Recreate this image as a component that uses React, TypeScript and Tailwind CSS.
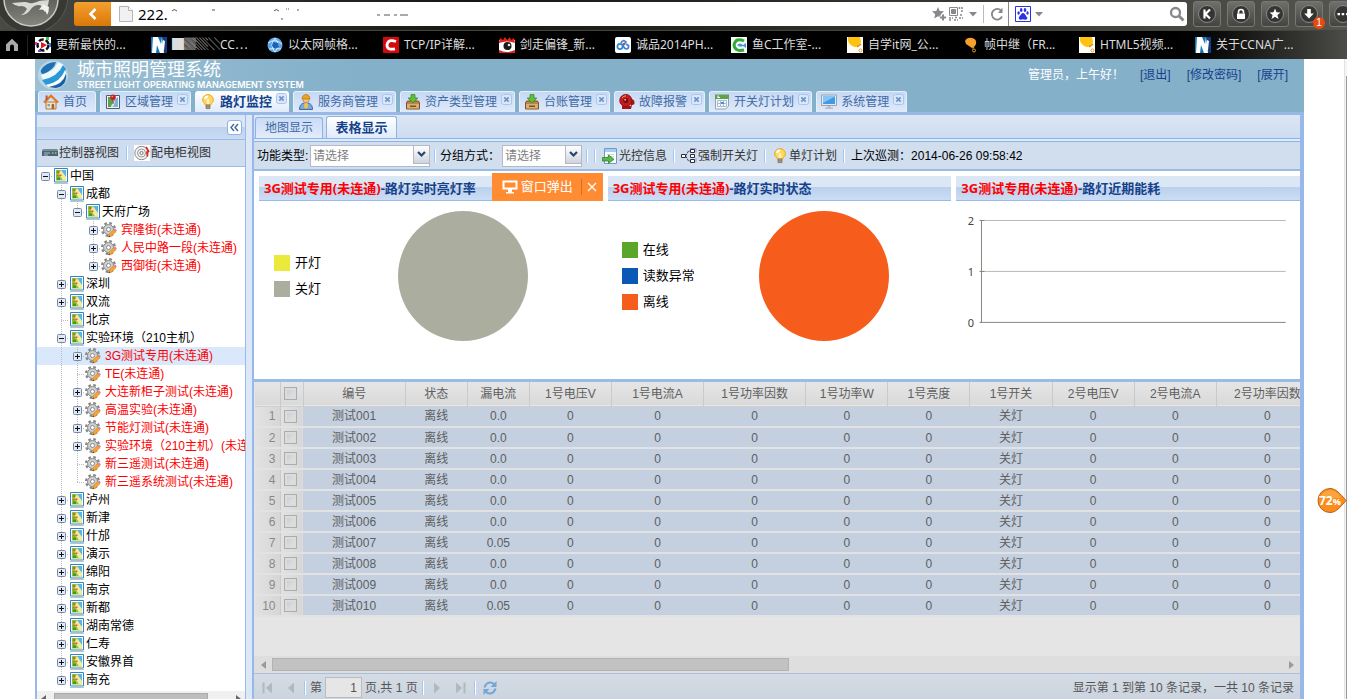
import React from "react";

type IconProps = { className?: string };

/* ---------- small icons ---------- */

const HouseIcon = () => (
  <svg viewBox="0 0 16 16" className="size-4 shrink-0">
    <path d="M3 8h10v7H3z" fill="#f6e3bd" stroke="#b07a3c" />
    <path d="M1 8.5 8 1.8l7 6.7" fill="none" stroke="#e2761b" strokeWidth="2.2" />
    <path d="M2.6 1.5h2v4l-2 1.6z" fill="#b4543a" />
    <path d="M8.6 15V10.4q1.3-1.4 2.6 0V15z" fill="#a5642c" />
    <path d="M4.5 10h2.4v2.4H4.5z" fill="#6aa5dd" />
  </svg>
);
const MapPinIcon = () => (
  <svg viewBox="0 0 16 16" className="size-4 shrink-0">
    <path d="M1.500 1.500h13v13h-13z" fill="#eef4f8" stroke="#4b5f73" />
    <path d="M3 3h4l1 4-2 6H3z" fill="#5fa04c" />
    <path d="M9 6l4-3v10H7z" fill="#7cb3dc" />
    <path d="M7 13l2-6 1 1-2 5z" fill="#f5eeb0" />
    <path d="M8 5v5" stroke="#444" />
    <circle cx="8" cy="3.2" r="2.8" fill="#cf2020" />
    <circle cx="7.3" cy="2.5" r=".8" fill="#ff9a9a" />
  </svg>
);
const BulbIcon = () => (
  <svg viewBox="0 0 16 16" className="size-4 shrink-0">
    <path d="M8 .6a5.400 5.400 0 0 0-5.400 5.300c0 2.400 2.400 3.200 2.800 5.100h5.200c.4-1.900 2.800-2.700 2.800-5.100A5.400 5.400 0 0 0 8 .6z" fill="#ffd95c" stroke="#eda521" />
    <path d="M5 5a3 3 0 0 1 3-2.600" stroke="#fff" strokeWidth="2" fill="none" />
    <path d="M8 5v5" stroke="#fff3b8" strokeWidth="2.400" />
    <path d="M6 11h4v3.600H6z" fill="#b0a690" stroke="#7d745f" strokeWidth=".8" />
    <path d="M6 12.800h4" stroke="#7d745f" strokeWidth=".8" />
  </svg>
);
const WorkerIcon = () => (
  <svg viewBox="0 0 16 16" className="size-4 shrink-0">
    <path d="M1.500 15.500c0-4.500 2-6.500 6.500-6.500s6.500 2 6.500 6.500z" fill="#7ba8da" stroke="#3f6cab" />
    <path d="M6.500 9h3l.5 4-2 2-2-2z" fill="#f3c344" />
    <circle cx="8" cy="5.600" r="3.200" fill="#f1c28c" stroke="#a8713a" strokeWidth=".6" />
    <path d="M4 5C4 2 6 .500 8 .500S12 2 12 5z" fill="#f0a31f" stroke="#b8730c" strokeWidth=".7" />
  </svg>
);
const BoxIcon = () => (
  <svg viewBox="0 0 16 16" className="size-4 shrink-0">
    <path d="M2.500 7h11l1 2v6h-13V9z" fill="#b98548" stroke="#7a5120" />
    <path d="M2 10h12v4.500H2z" fill="#d9ae70" />
    <path d="M5 11.500h6V13H5z" fill="#7a5120" />
    <path d="M6 .600h4V4h2.800L8 9 3.200 4H6z" fill="#63be3d" stroke="#378a1e" strokeWidth=".8" />
  </svg>
);
const BellIcon = () => (
  <svg viewBox="0 0 16 16" className="size-4 shrink-0">
    <path d="M11 6q4-2 4.500 2 .500 3-2.500 3l-1 4H3v-3h9z" fill="#a61515" />
    <circle cx="6.800" cy="6.500" r="6" fill="#c81c1c" stroke="#8c0f0f" />
    <circle cx="6.800" cy="6.500" r="2.600" fill="#7d0c0c" />
    <circle cx="6.200" cy="5.800" r="1" fill="#f2a0a0" />
    <path d="M3 4q1.500-2.200 4-2.200" stroke="#ff9d9d" fill="none" />
  </svg>
);
const CalendarIcon = () => (
  <svg viewBox="0 0 16 16" className="size-4 shrink-0">
    <path d="M1.500 1.500h13v11l-2.500 2.500H1.500z" fill="#f6f9fc" stroke="#8ea2b5" />
    <path d="M1 .500h14V5H1z" fill="#5da349" />
    <path d="M4 1.500v2h2" stroke="#fff" strokeWidth="1.200" fill="none" />
    <path d="M3.500 6.500h9v6h-9zM3.500 9.500h9M6.500 6.500v6M9.500 6.500v6" stroke="#a9bccf" fill="none" />
    <path d="M7 8h3v2H7z" fill="#4f8ce0" />
    <path d="M15 12l-3 3v-3z" fill="#c8d2dc" />
  </svg>
);
const MonitorIcon = () => (
  <svg viewBox="0 0 16 16" className="size-4 shrink-0">
    <path d="M.500 1h15v10.500H.500z" fill="#e5e9ee" stroke="#98a3b0" />
    <path d="M2 2.500h12V10H2z" fill="#3f9be8" />
    <path d="M2 2.500h12L2 9z" fill="#86c5f7" />
    <path d="M6.500 12h3v1.500h2.500V15H4v-1.500h2.500z" fill="#b5bdc7" />
  </svg>
);
const CloseBox = () => (
  <svg viewBox="0 0 11 11" className="size-[11px]">
    <rect x=".5" y=".5" width="10" height="10" rx="2" fill="#dbe8fa" stroke="#a9c5ec" />
    <path d="M3.300 3.300l4.400 4.400M7.700 3.300 3.300 7.700" stroke="#6f94c8" strokeWidth="1.700" />
  </svg>
);
const RegionIcon = () => (
  <svg viewBox="0 0 16 16" className="size-4 shrink-0">
    <path d="M1 15.500h14" stroke="#b9c4cc" />
    <path d="M1.500.500h13v13.500h-13z" fill="#fff" stroke="#2f86bb" />
    <path d="M3 2h10v10.500H3z" fill="#8cc63c" />
    <path d="M8 2h5v7z" fill="#57b5e8" />
    <path d="M8 2l5 7v3.500h-3L6 6z" fill="#f4e9a3" />
    <path d="M4 3h2v2H4zM6.500 6.500h2V8h-2zM4 7h1.500v1.500H4z" fill="#df5a26" />
    <path d="M4 9.500h3v2.500H4z" fill="#4f951c" />
  </svg>
);
const GearIcon = () => (
  <svg viewBox="0 0 16 16" className="size-4 shrink-0">
    <circle cx="7.500" cy="7.500" r="6.400" fill="none" stroke="#868686" strokeWidth="2.200" strokeDasharray="2.600 2.430" />
    <circle cx="7.500" cy="7.500" r="5" fill="#cfcfcf" stroke="#8a8a8a" />
    <circle cx="7.500" cy="7.500" r="2" fill="#fff" stroke="#8a8a8a" />
    <path d="M7.500 15l.700-3 4.500-4.500 2.200 2.200-4.500 4.500z" fill="#f7a52b" stroke="#c47a1c" strokeWidth=".5" />
    <path d="M12.700 7.500l1.200-1.200 2.100 2.100-1.200 1.200z" fill="#d58bc4" />
    <path d="M7.500 15l.5-1.800 1.300 1.300z" fill="#333" />
  </svg>
);
const ControllerIcon = () => (
  <svg viewBox="0 0 16 16" className="size-4 shrink-0">
    <path d="M1 4h14l1 2v5H0V6z" fill="#4f6272" />
    <path d="M0 5h16" stroke="#9fb4c2" />
    <path d="M2 8h6M2 10h4" stroke="#9dc1d8" />
    <path d="M10 8h1.500M13 8h1.500" stroke="#79e06b" strokeWidth="1.500" />
  </svg>
);
const MeterIcon = () => (
  <svg viewBox="0 0 16 16" className="size-4 shrink-0">
    <path d="M0 0h16v16H0z" fill="#fff" />
    <circle cx="7.500" cy="8" r="6.700" fill="#f3f3f3" stroke="#8a8a8a" />
    <circle cx="7.500" cy="8" r="4" fill="none" stroke="#999" />
    <circle cx="7.500" cy="8" r="1.600" fill="none" stroke="#777" />
    <path d="M12 2l2.600 4.200-1.700 1 .6 4.300" stroke="#dd2626" strokeWidth="1.700" fill="none" />
  </svg>
);
const LightControlIcon = () => (
  <svg viewBox="0 0 16 16" className="size-4 shrink-0">
    <path d="M2.500.500h12v15h-12z" fill="#fff" stroke="#6b9bc9" />
    <path d="M3 1h11v3H3z" fill="#a8cdf0" />
    <path d="M5 6.500h7M5 8.500h7" stroke="#c5d6e6" />
    <path d="M.500 9.500h6V7l5.500 4.300-5.500 4V13h-6z" fill="#5cb648" stroke="#2f8420" strokeWidth=".8" />
  </svg>
);
const SwitchTreeIcon = () => (
  <svg viewBox="0 0 16 16" className="size-4 shrink-0" fill="none" stroke="#2d2d3f">
    <path d="M5 7.500l2.500-4.500h2M5 8.500l2.500 4.500h2" strokeDasharray="2 1" />
    <path d="M.500 6.500h4v3h-4z" fill="#fff" />
    <path d="M9.500 1.500h4v3h-4zM9.500 6.500h4v3h-4zM9.500 11.500h4v3h-4z" fill="#fff" />
    <path d="M9 .500h6v4M15 10v4.500" stroke="#9a96d8" />
  </svg>
);

/* ---------- browser chrome ---------- */

const BrowserLogo = () => (
  <svg viewBox="0 0 74 31" className="h-[31px] w-[74px] shrink-0">
    <defs>
      <linearGradient id="logoRing" x1="0" y1="0" x2="0" y2="1">
        <stop offset="0" stopColor="#3a3a38" />
        <stop offset="1" stopColor="#86867f" />
      </linearGradient>
    </defs>
    <circle cx="31" cy="-4" r="37" fill="#383834" stroke="#5b5b55" />
    <circle cx="31" cy="-1" r="27" fill="url(#logoRing)" stroke="#c9c9c5" strokeWidth="1.500" />
    <path d="M12 3q4 4 9 3 4 0 6 3-2 4-6 6 6 0 10-6 3-4 8-4 5 1 5 7 4-4 5-12z" fill="#d8d8d5" />
    <path d="M22 0q5 4 11 3 5-1 8-3z" fill="#63635e" />
    <path d="M39 10q6-2 8 5 2-3 2-8l-6-3z" fill="#f0f0ee" />
  </svg>
);

const ChromeButton = ({ label, children, badge }: { label: string; children: React.ReactNode; badge?: string }) => (
  <button aria-label={label} className="relative flex h-[26px] w-7 shrink-0 items-center justify-center rounded-[3px] border border-[#777773] bg-linear-to-b from-[#6f6f6b] to-[#444440]">
    <svg viewBox="0 0 20 20" className="size-5">
      <circle cx="10" cy="10" r="8.500" fill="#343432" stroke="#8a8a86" />
      {children}
    </svg>
    {badge && (
      <span className="absolute top-[15px] left-[17px] z-10 flex size-3 items-center justify-center rounded-full bg-[#e8490f] text-[10px] leading-3 text-white">{badge}</span>
    )}
  </button>
);

const HelixMark = () => (
  <svg viewBox="0 0 16 16" className="size-4 shrink-0">
    <path d="M0 0h16v16H0z" fill="#1279b8" />
    <path d="M2 0h5l3 7 1-7h4l-2 16H9L6 8l-1 8H1z" fill="#fff" />
    <path d="M11 0h5v16h-3z" fill="#123f86" />
    <path d="M12 3l2 1-1 9-2 1z" fill="#fff" />
  </svg>
);
const BalloonMark = ({ plate }: { plate: boolean }) => (
  <svg viewBox="0 0 16 16" className="size-4 shrink-0">
    {plate && <path d="M0 0h16v16H0z" fill="#fffdf5" />}
    <path d={plate ? "M1 0h12l1 5q-2 5-6 5Q3 9 1 4z" : "M2 4q2-4 7-3 5 1 4 6-2 4-4 4L3 7z"} fill={plate ? "#ffc30f" : "#f5a02c"} />
    <path d={plate ? "M10 10l4-3" : "M9 11l2-1"} stroke="#d88a1c" strokeWidth="1.500" />
    <circle cx={plate ? 13.500 : 11} cy="13.500" r="1.500" fill="none" stroke="#e59a2a" />
  </svg>
);

const bookmarks: { name: string; icon: React.ReactNode }[] = [
  {
    name: "更新最快的...",
    icon: (
      <svg viewBox="0 0 16 16" className="size-4 shrink-0">
        <path d="M0 0h16v16H0z" fill="#fff" />
        <circle cx="8" cy="8" r="5.500" fill="none" stroke="#111" strokeWidth="2.500" strokeDasharray="5 2" />
        <path d="M6 5l6 3-6 3.500z" fill="#e01818" />
        <path d="M11 0h3v3h-3z" fill="#2ecb4a" />
        <path d="M0 5h2v3H0z" fill="#d932d0" />
        <path d="M14 6h2v4h-2z" fill="#2f7fe8" />
        <path d="M3 13h3v2H3z" fill="#7a41d8" />
      </svg>
    ),
  },
  { name: "█▓▒░CC⋯", icon: <HelixMark /> },
  {
    name: "以太网帧格...",
    icon: (
      <svg viewBox="0 0 16 16" className="size-4 shrink-0">
        <circle cx="8" cy="8" r="7.500" fill="#5ea7e4" />
        <path d="M1 6q7-5 14 1M2 12q6-1 12 0M8 1Q2 8 8 15M8 1q6 7 0 14" stroke="#d9edff" fill="none" />
        <path d="M6 5l5 1 1 4-4 2-3-3z" fill="#1d63b3" />
      </svg>
    ),
  },
  {
    name: "TCP/IP详解...",
    icon: (
      <svg viewBox="0 0 16 16" className="size-4 shrink-0">
        <path d="M0 0h16v16H0z" fill="#d5080b" />
        <path d="M13 4.500Q5 1.500 4 8q0 5.500 8 3.800" fill="none" stroke="#fff" strokeWidth="2.800" />
      </svg>
    ),
  },
  {
    name: "剑走偏锋_新...",
    icon: (
      <svg viewBox="0 0 16 16" className="size-4 shrink-0">
        <path d="M0 3h16v13H0z" fill="#fff" />
        <path d="M0 5l1-4 3 2 2-3 2 3 3-3 1 3 3-2 1 5q-8-3-16 0z" fill="#e2231a" />
        <path d="M0 13q8 4 16 0v3H0z" fill="#e2231a" />
        <circle cx="8.500" cy="9" r="4" fill="#1a1a1a" />
        <circle cx="10" cy="8" r="1.300" fill="#eee" />
      </svg>
    ),
  },
  {
    name: "诚品2014PH...",
    icon: (
      <svg viewBox="0 0 16 16" className="size-4 shrink-0">
        <rect width="16" height="16" rx="2" fill="#fff" />
        <circle cx="5" cy="9.500" r="2.600" fill="none" stroke="#2f86dd" strokeWidth="1.700" />
        <path d="M6 6q2-4 5-1l-3 3q1 4 4 4 2-1 1.500-3.500L11 7" fill="none" stroke="#2f86dd" strokeWidth="1.700" />
        <circle cx="9" cy="7" r="1.300" fill="#e23b3b" />
      </svg>
    ),
  },
  {
    name: "鱼C工作室-...",
    icon: (
      <svg viewBox="0 0 16 16" className="size-4 shrink-0">
        <path d="M0 0h16v16H0z" fill="#f6fff4" />
        <path d="M13 4Q5 0 3 8q1 7 10 5" fill="none" stroke="#34a83a" strokeWidth="3" />
        <path d="M6 8q3-3 6 0l3-2v5l-3-2q-3 2-6-1z" fill="#4a98d8" />
      </svg>
    ),
  },
  { name: "自学it网_公...", icon: <BalloonMark plate /> },
  { name: "帧中继（FR...", icon: <BalloonMark plate={false} /> },
  { name: "HTML5视频...", icon: <BalloonMark plate /> },
  { name: "关于CCNA广...", icon: <HelixMark /> },
];

const Caret = () => (
  <svg viewBox="0 0 8 5" className="h-[5px] w-2 shrink-0">
    <path d="M0 0h8L4 4.500z" fill="#888" />
  </svg>
);

function BrowserChrome() {
  return (
    <div className="shrink-0 bg-black text-white">
      <div className="flex h-[31px] items-start overflow-hidden border-b border-[#45453f] bg-linear-to-r from-[#4a4a45] via-[#171612] via-35% to-[#55554f]">
        <BrowserLogo />
        <button aria-label="后退" className="mt-[2px] flex h-6 w-[37px] shrink-0 items-center justify-center rounded-l-[3px] bg-linear-to-b from-[#f3a02c] to-[#d97807]">
          <svg viewBox="0 0 12 14" className="h-3.5 w-3">
            <path d="M8.500 2 3.500 7l5 5" fill="none" stroke="#fff" strokeWidth="2.600" />
          </svg>
        </button>
        <div className="mt-[2px] flex h-6 min-w-0 flex-1 items-center rounded-r-[3px] bg-white text-black">
          <svg viewBox="0 0 14 16" className="ml-2 h-4 w-3.5 shrink-0">
            <path d="M.500.500h9l4 4v11H.500z" fill="#f1f1f1" stroke="#b5b5b5" />
            <path d="M9.500.500v4h4" fill="#fff" stroke="#b5b5b5" />
          </svg>
          <input aria-label="地址" defaultValue="222." className="ml-[5px] w-[34px] bg-transparent font-['Noto_Sans',sans-serif] text-[15px] leading-6 outline-none" />
          <svg viewBox="0 0 240 14" className="h-3.5 w-60 shrink-0" fill="none" stroke="#555">
            <path d="M0 4q2-3 5 0M40 3h3M102 4q2-3 5 0M109 12h2M114 2h1M116 2h1M125 3h2M205 8h3M212 8h6M222 8h3M228 8h8" />
          </svg>
          <div className="ml-auto flex h-full items-center">
            <svg viewBox="0 0 16 16" className="size-4">
              <path d="M7 1l1.700 4 4.300.300-3.200 2.900 1 4.300L7 10.300l-3.800 2.200 1-4.300L1 5.300 5.300 5z" fill="#888" />
              <path d="M12 8v7M8.500 11.500h7" stroke="#fff" strokeWidth="4" />
              <path d="M12 8.500v6M9 11.500h6" stroke="#888" strokeWidth="2" />
            </svg>
            <svg viewBox="0 0 14 14" className="ml-0.5 size-3.5" fill="none" stroke="#888">
              <path d="M.500.500h8v8h-8z" />
              <path d="M2.500 2.500h4v4h-4z" fill="#888" />
              <path d="M10.500 0v3M13 0v6M11 8h3M0 11h4M5 13h4M10 11h4M0 13h3M6 10.500h2" strokeWidth="1.500" strokeDasharray="2 1" />
            </svg>
            <span className="ml-1.5"><Caret /></span>
            <span className="mx-1.5 h-[18px] w-px bg-[#bbb]" />
            <svg viewBox="0 0 14 14" className="size-3.5" fill="none" stroke="#888" strokeWidth="1.800">
              <path d="M12 9.500A5.300 5.300 0 1 1 11 3.500" />
              <path d="M12.500.500V6H8z" fill="#888" stroke="none" />
            </svg>
            <span className="ml-1 h-full w-px bg-[#888]" />
            <svg viewBox="0 0 16 16" className="ml-1.5 size-4">
              <path d="M.500.500h15v15H.500z" fill="#fff" stroke="#2b33e0" />
              <g fill="#2b33e0">
                <ellipse cx="6.200" cy="4" rx="1.300" ry="1.900" />
                <ellipse cx="10" cy="4" rx="1.300" ry="1.900" />
                <ellipse cx="3.600" cy="7" rx="1.200" ry="1.700" />
                <ellipse cx="12.500" cy="7" rx="1.200" ry="1.700" />
                <path d="M8 7q1.500 0 2.500 2t2 3q-.5 2-2.500 1.700-2-.7-4 0Q4 14 3.600 12q.8-2 2-3Q6.500 7 8 7z" />
              </g>
            </svg>
            <span className="ml-1"><Caret /></span>
            <input aria-label="搜索" className="w-[126px] bg-transparent outline-none" />
            <svg viewBox="0 0 16 16" className="size-4" fill="none" stroke="#888" strokeWidth="2.300">
              <circle cx="6.500" cy="6.500" r="4.500" />
              <path d="M10 10l4.500 4.500" strokeWidth="3" />
            </svg>
            <span className="w-0.5" />
          </div>
        </div>
        <div className="-mr-2.5 ml-[6px] flex gap-[6px] pt-px">
          <ChromeButton label="快捷"><path d="M7.500 5.500v9M13 5.500l-4.500 4.500 4.500 4.500" fill="none" stroke="#fff" strokeWidth="2.200" /></ChromeButton>
          <ChromeButton label="锁定"><path d="M6 9.500h8v5.500H6z" fill="#fff" /><path d="M7.500 9.500V8a2.500 2.500 0 0 1 5 0v1.500" fill="none" stroke="#fff" strokeWidth="1.600" /></ChromeButton>
          <ChromeButton label="收藏"><path d="M10 4.500l1.500 3.800 4 .200-3.100 2.500 1.100 4L10 12.700 6.500 15l1.100-4-3.100-2.500 4-.200z" fill="#fff" /></ChromeButton>
          <ChromeButton label="下载" badge="1"><path d="M8.200 5h3.600v4.500h3L10 14.500 5.200 9.500h3z" fill="#fff" /></ChromeButton>
          <ChromeButton label="更多"><path d="M4.500 9h2.500v2.300H4.500zM8.700 9h2.500v2.300H8.700zM13 9h2.500v2.300H13z" fill="#fff" /></ChromeButton>
        </div>
      </div>
      <nav className="flex h-7 items-center overflow-hidden bg-linear-to-r from-black from-85% to-[#4d4d49] font-['Noto_Sans','Noto_Sans_CJK_SC',sans-serif] text-[12px] leading-4 text-[#dcdcdc]">
        <a href="#home" aria-label="主页" className="mr-[7px] ml-[5px] flex h-5 w-[23px] shrink-0 items-center border-r border-[#222]">
          <svg viewBox="0 0 14 14" className="size-3.5">
            <path d="M1 6.500 7 .800l6 5.700V13H9V8.500a2 2 0 0 0-4 0V13H1z" fill="#aaa" />
          </svg>
        </a>
        {bookmarks.map((b, i) => (
          <a key={i} href="#bookmark" className="flex w-[116px] shrink-0 items-center gap-[5px] whitespace-nowrap">
            {b.icon}
            {b.name}
          </a>
        ))}
      </nav>
    </div>
  );
}

/* ---------- application header ---------- */

const mainTabs = [
  { name: "首页", icon: <HouseIcon />, fixed: true },
  { name: "区域管理", icon: <MapPinIcon /> },
  { name: "路灯监控", icon: <BulbIcon />, active: true },
  { name: "服务商管理", icon: <WorkerIcon /> },
  { name: "资产类型管理", icon: <BoxIcon /> },
  { name: "台账管理", icon: <BoxIcon /> },
  { name: "故障报警", icon: <BellIcon /> },
  { name: "开关灯计划", icon: <CalendarIcon /> },
  { name: "系统管理", icon: <MonitorIcon /> },
];

function AppHeader() {
  return (
    <header className="shrink-0 bg-[#84b0ca]">
      <div className="flex h-8 items-center bg-linear-to-r from-[#9cc0d4] via-[#84b0ca] via-25% to-[#84b0ca] pl-[3px]">
        <svg viewBox="0 0 32 30" className="h-[30px] w-8 shrink-0">
          <ellipse cx="15" cy="15" rx="15" ry="14.500" fill="#d8ecf6" opacity=".5" />
          <path d="M3 10Q8 2 18 2q-2 8-13 12-3-1-2-4z" fill="#1f6fb2" />
          <path d="M3 15Q16 12 20 2l6 3Q22 17 5 20z" fill="#eef8fd" />
          <path d="M4 20Q20 17 25 5l3 4Q25 22 8 25z" fill="#2a98d8" />
          <path d="M8 25Q23 22 27 10l1 3Q25 24 11 27z" fill="#fff" />
          <path d="M11 27q14-2 17-13 1 12-10 14z" fill="#1760a8" />
        </svg>
        <div className="ml-[7px] text-white">
          <h1 className="text-[18px] leading-[19px] font-normal">城市照明管理系统</h1>
          <p className="font-['Inter',sans-serif] text-[9px] leading-[9px] font-semibold">STREET LIGHT OPERATING MANAGEMENT SYSTEM</p>
        </div>
        <div className="mr-4 ml-auto flex gap-4 text-[#15428b]">
          <span className="text-white">管理员，上午好！</span>
          <a href="#logout">[退出]</a>
          <a href="#password">[修改密码]</a>
          <a href="#expand">[展开]</a>
        </div>
      </div>
      <div role="tablist" className="flex h-[21px] items-stretch gap-1 pl-[3px]">
        {mainTabs.map((t) => (
          <div
            key={t.name}
            className={
              t.active
                ? "flex items-start rounded-t-[3px] bg-linear-to-b from-white to-[#dfebfb] text-[13px] font-bold text-[#15428b]"
                : "flex items-start rounded-t-[3px] border border-b-0 border-[#e6f0fd] bg-linear-to-b from-[#c5d9f5] to-[#dfeafb] text-[#416aa3]"
            }
          >
            <button role="tab" aria-selected={!!t.active} className={t.active ? "flex h-[21px] items-center gap-1 pl-[5px]" : "flex h-5 items-center gap-1 pl-1"}>
              {t.icon}
              {t.name}
            </button>
            {t.fixed ? <span className="w-2" /> : (
              <button aria-label={"关闭" + t.name} className="mt-[2px] mr-[2px] ml-1"><CloseBox /></button>
            )}
          </div>
        ))}
      </div>
      <div className="h-[3px] bg-[#98b8e6]" />
    </header>
  );
}

/* ---------- sidebar tree ---------- */

type Node = { d: number; name: string; toggle?: "+" | "-"; dev?: boolean; last?: boolean; lines?: number[]; selected?: boolean };

const nodes: Node[] = [
  { d: 0, name: "中国", toggle: "-", last: true },
  { d: 1, name: "成都", toggle: "-" },
  { d: 2, name: "天府广场", toggle: "-", last: true, lines: [1] },
  { d: 3, name: "宾隆街(未连通)", toggle: "+", dev: true, lines: [1] },
  { d: 3, name: "人民中路一段(未连通)", toggle: "+", dev: true, lines: [1] },
  { d: 3, name: "西御街(未连通)", toggle: "+", dev: true, last: true, lines: [1] },
  { d: 1, name: "深圳", toggle: "+" },
  { d: 1, name: "双流", toggle: "+" },
  { d: 1, name: "北京" },
  { d: 1, name: "实验环境（210主机）", toggle: "-" },
  { d: 2, name: "3G测试专用(未连通)", toggle: "+", dev: true, lines: [1], selected: true },
  { d: 2, name: "TE(未连通)", dev: true, lines: [1] },
  { d: 2, name: "大连新柜子测试(未连通)", toggle: "+", dev: true, lines: [1] },
  { d: 2, name: "高温实验(未连通)", toggle: "+", dev: true, lines: [1] },
  { d: 2, name: "节能灯测试(未连通)", toggle: "+", dev: true, lines: [1] },
  { d: 2, name: "实验环境（210主机）(未连通)", toggle: "+", dev: true, lines: [1] },
  { d: 2, name: "新三遥测试(未连通)", dev: true, lines: [1] },
  { d: 2, name: "新三遥系统测试(未连通)", dev: true, last: true, lines: [1] },
  { d: 1, name: "泸州", toggle: "+" },
  { d: 1, name: "新津", toggle: "+" },
  { d: 1, name: "什邡", toggle: "+" },
  { d: 1, name: "演示", toggle: "+" },
  { d: 1, name: "绵阳", toggle: "+" },
  { d: 1, name: "南京", toggle: "+" },
  { d: 1, name: "新都", toggle: "+" },
  { d: 1, name: "湖南常德", toggle: "+" },
  { d: 1, name: "仁寿", toggle: "+" },
  { d: 1, name: "安徽界首", toggle: "+" },
  { d: 1, name: "南充", toggle: "+", last: true },
];

const Guide = ({ line }: { line: boolean }) => (
  <svg viewBox="0 0 16 18" className="h-[18px] w-4 shrink-0">
    {line && <path d="M8.500 0v18" stroke="#bbb" strokeDasharray="1 1" />}
  </svg>
);
const Elbow = ({ node }: { node: Node }) => (
  <svg viewBox="0 0 16 18" className="h-[18px] w-4 shrink-0">
    <path d={`M8.500 ${node.d === 0 ? 9 : 0}V${node.last ? 9 : 18}M8 9.500h8`} stroke="#bbb" strokeDasharray="1 1" fill="none" />
    {node.toggle && (
      <>
        <rect x="4.500" y="5.500" width="8" height="8" rx="1" fill="#e3e9f2" stroke="#7289ab" />
        <path d="M6 9.500h5" stroke="#111" />
        {node.toggle === "+" && <path d="M8.500 7v5" stroke="#111" />}
      </>
    )}
  </svg>
);

const ArrowLeft = ({ className }: IconProps) => (
  <svg viewBox="0 0 5 8" className={className}><path d="M5 0v8L0 4z" fill="currentColor" /></svg>
);
const ArrowRight = ({ className }: IconProps) => (
  <svg viewBox="0 0 5 8" className={className}><path d="M0 0v8l5-4z" fill="currentColor" /></svg>
);

function Sidebar() {
  return (
    <aside className="flex w-[209px] shrink-0 flex-col overflow-hidden border-r border-[#99bbe8] bg-white">
      <div className="flex h-[25px] shrink-0 items-center justify-end border-b border-[#99bbe8] bg-linear-to-b from-[#dbe6f5] from-50% via-[#bcd2ee] via-50% to-[#cbdcf3] pr-[3px]">
        <button aria-label="收起" className="flex size-[15px] items-center justify-center rounded-[3px] border border-[#8fb3e2] bg-white">
          <svg viewBox="0 0 9 9" className="size-[9px]" fill="none" stroke="#3a68a8" strokeWidth="1.400">
            <path d="M4 1 1 4.500 4 8M8 1 5 4.500 8 8" />
          </svg>
        </button>
      </div>
      <div className="flex h-[27px] shrink-0 items-center border-b border-[#99bbe8] bg-[#cfddee] pl-[5px] text-[#333]">
        <button className="flex items-center gap-px whitespace-nowrap"><ControllerIcon />控制器视图</button>
        <span className="mr-[6px] ml-[7px] h-3.5 w-0.5 border-r border-white bg-[#98c8ff]" />
        <button className="flex items-center gap-px whitespace-nowrap"><MeterIcon />配电柜视图</button>
      </div>
      <ul role="tree" className="min-h-0 flex-1 overflow-hidden">
        {nodes.map((n) => (
          <li
            key={n.name}
            role="treeitem"
            className={n.selected ? "flex h-[18px] items-center bg-[#d9e8fb] leading-[18px] whitespace-nowrap" : "flex h-[18px] items-center leading-[18px] whitespace-nowrap"}
          >
            {Array.from({ length: n.d }, (_, k) => <Guide key={k} line={!!n.lines?.includes(k)} />)}
            <Elbow node={n} />
            {n.dev ? <GearIcon /> : <RegionIcon />}
            <span className={n.dev ? "pl-1 text-[#ff0000]" : "pl-px text-black"}>{n.name}</span>
          </li>
        ))}
      </ul>
      <div className="flex h-2 shrink-0 items-start bg-[#f0f0f0] pt-0.5 pr-1 pl-1 text-[#666]">
        <ArrowLeft className="mt-0.5 mr-2 h-2 w-[5px]" />
        <span className="h-2 w-[154px] border border-[#aaa] bg-[#bdbdbd]" />
        <ArrowRight className="mt-0.5 ml-auto h-2 w-[5px]" />
      </div>
    </aside>
  );
}

/* ---------- main panel ---------- */

const Separator = ({ className }: IconProps) => (
  <span className={"h-3.5 w-0.5 shrink-0 border-r border-white bg-[#98c8ff] " + (className ?? "")} />
);

function Combo({ id, wide }: { id: string; wide?: boolean }) {
  return (
    <div className="flex h-[22px] border border-[#b5b8c8] bg-white">
      <select id={id} className={wide ? "w-[102px] appearance-none bg-transparent pl-0.5 text-[#808080] outline-none" : "w-[62px] appearance-none bg-transparent pl-0.5 text-[#808080] outline-none"}>
        <option>请选择</option>
      </select>
      <span className="mb-0.5 flex w-4 items-center justify-center border-b border-l border-[#b5b8c8] bg-linear-to-b from-white to-[#cfd4dd]">
        <svg viewBox="0 0 9 7" className="h-[7px] w-[9px]"><path d="M1 1l3.500 3.500L8 1" fill="none" stroke="#26456f" strokeWidth="2.200" /></svg>
      </span>
    </div>
  );
}

function Toolbar() {
  return (
    <div className="flex h-[29px] shrink-0 items-center border-b-2 border-[#99bbe8] bg-[#d0deee] pl-[3px] whitespace-nowrap text-[#333]">
      <label htmlFor="func" className="w-[53px] text-black">功能类型:</label>
      <Combo id="func" wide />
      <Separator className="mr-1 ml-1" />
      <label htmlFor="group" className="w-[62px] text-black">分组方式：</label>
      <Combo id="group" />
      <Separator className="ml-1" />
      <Separator className="mr-1.5 ml-1.5" />
      <button className="flex items-center gap-px"><LightControlIcon />光控信息</button>
      <Separator className="mr-1.5 ml-1.5" />
      <button className="flex items-center gap-px"><SwitchTreeIcon />强制开关灯</button>
      <Separator className="mr-1.5 ml-1.5" />
      <button className="flex items-center gap-px"><BulbIcon />单灯计划</button>
      <Separator className="mr-1.5 ml-1.5" />
      <span className="text-black">上次巡测：2014-06-26 09:58:42</span>
    </div>
  );
}

function ChartPanel({ title, children, overlay }: { title: string; children: React.ReactNode; overlay?: React.ReactNode }) {
  return (
    <section className="relative min-w-0 flex-1">
      <h2 className="flex h-[25px] items-center border-b border-[#99bbe8] bg-linear-to-b from-[#dce7f5] from-45% via-[#bad0ee] via-45% to-[#ccddf4] pl-[5px] font-['Open_Sans','Noto_Sans_CJK_SC',sans-serif] text-[13px] font-bold whitespace-nowrap text-[#15428b]">
        <span className="text-[#ff0000]">3G测试专用(未连通)</span>-{title}
      </h2>
      {overlay}
      {children}
    </section>
  );
}

const Legend = ({ items }: { items: { name: string; swatch: string }[] }) => (
  <ul className="flex flex-col gap-2.5 text-[13px] leading-4 text-black">
    {items.map((i) => (
      <li key={i.name} className="flex items-center gap-[5px]">
        <span className={"size-4 " + i.swatch} />
        {i.name}
      </li>
    ))}
  </ul>
);

const Pie = ({ color }: { color: string }) => (
  <svg viewBox="0 0 130 130" className="size-[130px] shrink-0"><circle cx="65" cy="65" r="65" fill={color} /></svg>
);

function Charts() {
  return (
    <div className="flex h-[208px] shrink-0 gap-[5px] bg-white pt-[5px] pl-[5px]">
      <ChartPanel
        title="路灯实时亮灯率"
        overlay={
          <div className="absolute -top-[3px] right-0 flex h-7 w-[111px] items-center bg-[#ff8c32] pl-2.5 text-white">
            <button className="flex items-center gap-[3px] text-[13px] whitespace-nowrap">
              <svg viewBox="0 0 16 14" className="h-3.5 w-4 shrink-0">
                <path d="M1.500 1.500h13v7h-13z" fill="none" stroke="#fff" strokeWidth="2" />
                <path d="M6 9h4v3h2v1.500H4V12h2z" fill="#fff" />
              </svg>
              窗口弹出
            </button>
            <button aria-label="关闭" className="ml-auto flex h-4 w-[22px] items-center justify-center border-l border-[#d8701c]">
              <svg viewBox="0 0 10 10" className="size-2.5"><path d="M1 1l8 8M9 1 1 9" stroke="#fff" strokeWidth="1.300" /></svg>
            </button>
          </div>
        }
      >
        <div className="mt-2.5 flex items-center pl-[15px]">
          <div className="w-[124px]"><Legend items={[{ name: "开灯", swatch: "bg-[#ebe93b]" }, { name: "关灯", swatch: "bg-[#abae9f]" }]} /></div>
          <Pie color="#abae9f" />
        </div>
      </ChartPanel>
      <ChartPanel title="路灯实时状态">
        <div className="mt-2.5 flex items-center pl-3.5">
          <div className="w-[137px]"><Legend items={[{ name: "在线", swatch: "bg-[#5aa62b]" }, { name: "读数异常", swatch: "bg-[#0b57b5]" }, { name: "离线", swatch: "bg-[#f65c1b]" }]} /></div>
          <Pie color="#f65c1b" />
        </div>
      </ChartPanel>
      <ChartPanel title="路灯近期能耗">
        <svg viewBox="0 0 344 140" className="w-full font-['Noto_Sans',sans-serif]">
          <path d="M26 19.500h304M26 70.500h304" stroke="#b9bab2" />
          <path d="M23.500 19.500h5M23.500 70.500h5M23.500 121.500h306.500M25.500 19v103" stroke="#85877f" fill="none" />
          <g fontSize="11" fill="#444" textAnchor="end">
            <text x="18" y="24">2</text>
            <text x="18" y="75">1</text>
            <text x="18" y="126">0</text>
          </g>
        </svg>
      </ChartPanel>
    </div>
  );
}

const columns: { name: string; width: string }[] = [
  { name: "编号", width: "w-[102px]" },
  { name: "状态", width: "w-[62px]" },
  { name: "漏电流", width: "w-[62px]" },
  { name: "1号电压V", width: "w-[82px]" },
  { name: "1号电流A", width: "w-[92px]" },
  { name: "1号功率因数", width: "w-[102px]" },
  { name: "1号功率W", width: "w-[82px]" },
  { name: "1号亮度", width: "w-[82px]" },
  { name: "1号开关", width: "w-[82px]" },
  { name: "2号电压V", width: "w-[82px]" },
  { name: "2号电流A", width: "w-[82px]" },
  { name: "2号功率因数", width: "w-[102px]" },
];
const leakage = ["0.0", "0.0", "0.0", "0.0", "0.0", "0.0", "0.05", "0.0", "0.0", "0.05"];
const rows = leakage.map((leak, i) => [
  "测试" + String(i + 1).padStart(3, "0"), "离线", leak, "0", "0", "0", "0", "0", "关灯", "0", "0", "0",
]);

const Check = ({ label }: { label: string }) => (
  <input type="checkbox" aria-label={label} className="block size-[13px] appearance-none border border-[#a9adb0] bg-linear-to-br from-[#c6cacf] to-[#e6e6e6] ring-2 ring-[#dcdcdc] ring-inset" />
);

function Grid() {
  return (
    <div className="min-h-0 flex-1 overflow-hidden bg-[#e5e5e5] pl-px">
      <table className="w-[1064px] table-fixed border-collapse text-center text-[#5e5e5e]">
        <thead>
          <tr className="h-6 border-b border-[#cfcfcf] bg-linear-to-b from-[#e6e6e6] to-[#d9d9d9]">
            <th className="w-[25px] border-r border-[#cacaca]" />
            <th className="w-[23px] border-r border-[#cacaca] pl-[3px]"><Check label="全选" /></th>
            {columns.map((c) => (
              <th key={c.name} className={"border-r border-[#cacaca] p-0 font-normal whitespace-nowrap " + c.width}>{c.name}</th>
            ))}
          </tr>
        </thead>
        <tbody>
          {rows.map((r, i) => (
            <tr key={r[0]} className="h-[21px] border-b-2 border-[#e2e2e2] bg-[#c4d0df]">
              <td className="border-r border-[#cacaca] bg-linear-to-r from-[#e2e2e2] to-[#d6d6d6] p-0 pr-1 text-right text-[#888]">{i + 1}</td>
              <td className="bg-linear-to-r from-[#e2e2e2] to-[#d6d6d6] p-0 pl-[3px]"><Check label={"选择" + r[0]} /></td>
              {r.map((v, k) => <td key={k} className="p-0 leading-[18px]">{v}</td>)}
            </tr>
          ))}
        </tbody>
      </table>
    </div>
  );
}

const PageArrow = ({ flip, bar, label }: { flip?: boolean; bar?: boolean; label: string }) => (
  <button aria-label={label} className="text-[#b2b8bf]">
    <svg viewBox="0 0 12 12" className={flip ? "size-3 rotate-180" : "size-3"}>
      <path d="M10 0.500v11L4 6z" fill="currentColor" />
      {bar && <path d="M1.500.500v11" stroke="currentColor" strokeWidth="2" />}
    </svg>
  </button>
);

function Pager() {
  return (
    <div className="flex h-[26px] shrink-0 items-center border-t border-[#a9bfdb] bg-linear-to-b from-[#d5dce5] to-[#cbd4df] pt-0.5 pr-1.5 pl-2 text-[#555]">
      <PageArrow label="首页" bar />
      <span className="ml-2.5 flex"><PageArrow label="上一页" /></span>
      <Separator className="mr-1 ml-2" />
      <label htmlFor="page">第</label>
      <input id="page" defaultValue="1" className="mx-[3px] h-[21px] w-[37px] border border-[#b9bcc4] bg-[#e6e6e6] pr-1 text-right text-[#555] outline-none" />
      <span>页,共 1 页</span>
      <Separator className="mr-2 ml-1" />
      <PageArrow label="下一页" flip />
      <span className="ml-2.5 flex"><PageArrow label="末页" flip bar /></span>
      <Separator className="mr-1.5 ml-2" />
      <button aria-label="刷新">
        <svg viewBox="0 0 16 16" className="size-4" fill="none" stroke="#74a6d6" strokeWidth="2.200">
          <path d="M2.500 7.500Q4 2.500 8.500 2.500q2.500 0 4 2.500M13.500 8.500Q12 13.500 7.500 13.500q-2.500 0-4-2.500" />
          <path d="M14.500 1v6h-6zM1.500 15V9h6z" fill="#74a6d6" stroke="none" />
        </svg>
      </button>
      <span className="ml-auto">显示第 1 到第 10 条记录，一共 10 条记录</span>
    </div>
  );
}

function MainPanel() {
  return (
    <main className="flex min-w-0 flex-1 flex-col border-r-4 border-l-2 border-[#97b8e8] bg-white">
      <div role="tablist" className="flex h-6 shrink-0 items-end gap-[3px] border-b border-[#8db2e3] bg-linear-to-b from-[#dce6f4] to-[#cddcf0] pl-px">
        <button role="tab" aria-selected={false} className="h-[21px] w-[68px] rounded-t-[3px] border border-b-0 border-[#8db2e3] bg-linear-to-b from-[#c9dcf6] to-[#e2ecfb] text-[#416aa3]">地图显示</button>
        <button role="tab" aria-selected className="h-[22px] w-[71px] rounded-t-[3px] border border-b-0 border-[#8db2e3] bg-linear-to-b from-white to-[#dfebfb] text-[13px] font-bold text-[#15428b]">表格显示</button>
      </div>
      <div className="h-[3px] shrink-0 border-b border-[#8db2e3] bg-[#deecfd]" />
      <Toolbar />
      <Charts />
      <div className="h-[3px] shrink-0 bg-[#99bbe8]" />
      <Grid />
      <div className="flex h-[17px] shrink-0 items-center bg-[#dedede] pr-1.5 pl-[7px] text-[#9a9a9a]">
        <ArrowLeft className="mr-1.5 h-2 w-[5px]" />
        <span className="h-[13px] w-1/2 border border-[#b2b2b2] bg-[#c2c2c2]" />
        <ArrowRight className="ml-auto h-2 w-[5px]" />
      </div>
      <Pager />
    </main>
  );
}

export default function App() {
  return (
    <div className="relative flex h-screen flex-col overflow-hidden bg-white font-['Liberation_Sans','Noto_Sans_CJK_SC',sans-serif] text-[12px] leading-4">
      <BrowserChrome />
      <div className="flex min-h-0 flex-1">
        <div className="ml-[35px] flex min-w-0 flex-1 flex-col">
          <AppHeader />
          <div className="flex min-h-0 flex-1 border-l-2 border-[#97b8e8] bg-[#dce8f8]">
            <Sidebar />
            <div className="w-1.5 shrink-0" />
            <MainPanel />
          </div>
        </div>
        <div className="ml-10 w-[3px] border-l border-[#e4e4e4] bg-[#f4f4f4] pt-[17px]">
          <div className="ml-px h-full bg-[#9a9a9a]" />
        </div>
      </div>
      <div className="absolute top-[487px] right-0 flex h-7 w-[30px] items-center">
        <svg viewBox="0 0 30 28" className="absolute inset-0 h-7 w-[30px]">
          <path d="M13 1.500c6 0 10 5 16 12-6 7-10 12-16 12a12 12 0 0 1 0-24z" fill="#fb8c1d" stroke="#b5651b" />
          <path d="M3 11q2-7 10-8 6 0 11 8z" fill="#fca43f" />
        </svg>
        <span className="relative pl-0.5 font-['Open_Sans',sans-serif] text-[12px] font-bold text-white">72<span className="text-[9px]">%</span></span>
      </div>
    </div>
  );
}
